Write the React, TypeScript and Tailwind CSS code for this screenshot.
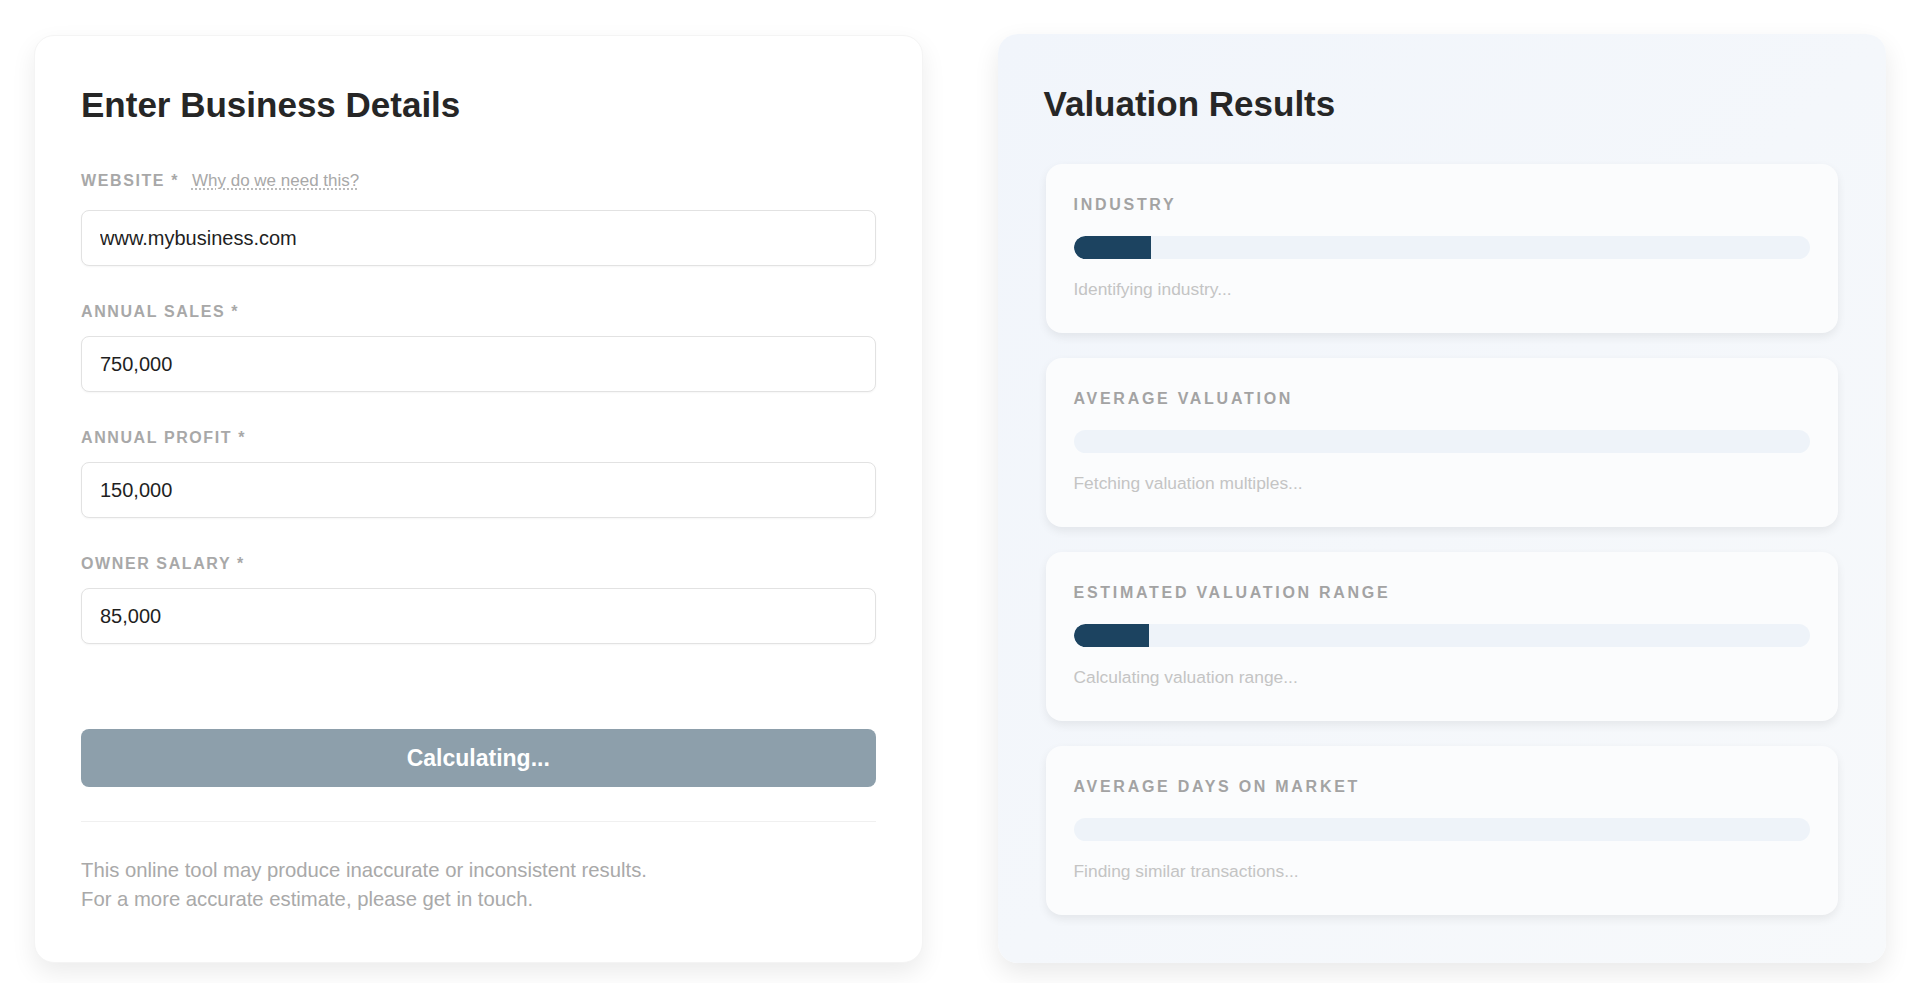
import React from 'react';

const fields = [
  { label: 'ANNUAL SALES *', value: '750,000' },
  { label: 'ANNUAL PROFIT *', value: '150,000' },
  { label: 'OWNER SALARY *', value: '85,000' },
];

const results = [
  { label: 'INDUSTRY', status: 'Identifying industry...', progress: 10.5 },
  { label: 'AVERAGE VALUATION', status: 'Fetching valuation multiples...', progress: 0 },
  { label: 'ESTIMATED VALUATION RANGE', status: 'Calculating valuation range...', progress: 10.2 },
  { label: 'AVERAGE DAYS ON MARKET', status: 'Finding similar transactions...', progress: 0 },
];

function TextInput({ value }: { value: string }) {
  return (
    <input
      readOnly
      value={value}
      className="block w-full h-[56px] rounded-[8px] border-[1.5px] border-[#e2e2e2] bg-white px-[18px] text-[20px] text-[#1f1f1f] outline-none shadow-[0_1px_2px_rgba(0,0,0,0.04)]"
    />
  );
}

export default function App() {
  return (
    <div className="min-h-screen bg-white px-[34px] pt-[35px] pb-[20px] font-['Liberation_Sans',Arial,sans-serif]">
      <div className="grid grid-cols-2 gap-[75px]">
        {/* Form card */}
        <div className="h-[928px] rounded-[20px] bg-white border border-[#f4f4f4] px-[46px] pt-[49px] shadow-[0_10px_24px_rgba(0,0,0,0.08)]">
          <h1 className="text-[35px] leading-[40px] font-bold text-[#262626]">Enter Business Details</h1>

          <div className="mt-[44px]">
            <div className="flex items-baseline gap-[13px] leading-[24px]">
              <span className="text-[16px] font-bold tracking-[0.1em] text-[#a8a8a8]">WEBSITE *</span>
              <span className="text-[17px] text-[#a8a8a8] underline decoration-dotted decoration-[#b0b0b0] underline-offset-[3px]">
                Why do we need this?
              </span>
            </div>
            <div className="mt-[17px]">
              <TextInput value="www.mybusiness.com" />
            </div>
          </div>

          {fields.map((f) => (
            <div key={f.label} className="mt-[34px]">
              <div className="text-[16px] leading-[24px] font-bold tracking-[0.1em] text-[#a8a8a8]">{f.label}</div>
              <div className="mt-[12px]">
                <TextInput value={f.value} />
              </div>
            </div>
          ))}

          <button className="mt-[85px] block w-full h-[58px] rounded-[8px] bg-[#8d9fab] text-[23px] font-bold text-white">
            Calculating...
          </button>

          <div className="mt-[34px] border-t border-[#f0f0f0]" />

          <p className="mt-[34px] text-[20.3px] leading-[29px] text-[#a9a9a9]">
            This online tool may produce inaccurate or inconsistent results.
            <br />
            For a more accurate estimate, please get in touch.
          </p>
        </div>

        {/* Results card */}
        <div className="h-[929px] -mt-px rounded-[20px] bg-gradient-to-br from-[#f1f5fb] to-[#f7f9fb] px-[46px] pt-[50px] shadow-[0_10px_26px_rgba(0,0,0,0.09)]">
          <h2 className="text-[35px] leading-[40px] font-bold text-[#262626]">Valuation Results</h2>

          <div className="mt-[40px] flex flex-col gap-[25px] px-[2px]">
            {results.map((r) => (
              <div
                key={r.label}
                className="h-[169px] rounded-[16px] bg-[#fbfcfd] px-[28px] pt-[29px] shadow-[0_4px_10px_rgba(0,0,0,0.07)]"
              >
                <div className="text-[16px] leading-[24px] font-bold tracking-[0.17em] text-[#a3a3a3]">{r.label}</div>
                <div className="mt-[19px] h-[23px] w-full overflow-hidden rounded-full bg-[#eef3f9]">
                  {r.progress > 0 && (
                    <div className="h-full rounded-l-full bg-[#1c4360]" style={{ width: `${r.progress}%` }} />
                  )}
                </div>
                <div className="mt-[18px] text-[17.4px] leading-[24px] text-[#c4c4c4]">{r.status}</div>
              </div>
            ))}
          </div>
        </div>
      </div>
    </div>
  );
}
